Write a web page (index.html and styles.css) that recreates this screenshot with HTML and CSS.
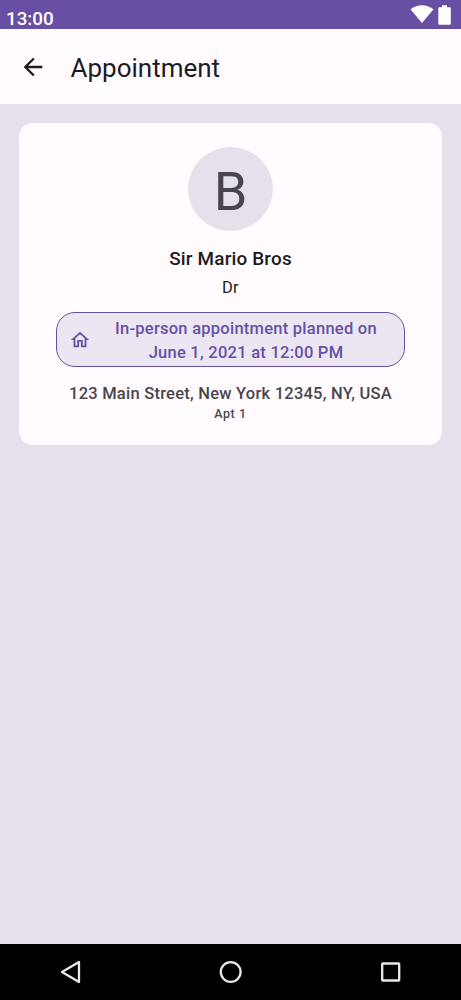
FILE: index.html
```html
<!DOCTYPE html>
<html lang="en">
<head>
<meta charset="utf-8">
<title>Appointment</title>
<link rel="stylesheet" href="styles.css">
</head>
<body>
<div class="screen">
  <div class="status-bar">
    <span class="clock">13:00</span>
    <div class="status-icons">
      <svg class="wifi" width="24" height="18" viewBox="0 0 24 18"><path d="M.5 4.300Q12-4 23.500 4.300L12 18Z"/></svg>
      <svg class="battery" width="13" height="20" viewBox="0 0 13 20"><path d="M4 .3h5v2h2.800q1 0 1 1v15.200q0 1.200-1.200 1.200H1.400Q.3 19.700.3 18.500V3.300q0-1 1-1H4z"/></svg>
    </div>
  </div>
  <header class="app-bar">
    <svg class="back" width="28" height="28" viewBox="0 0 24 24"><path d="M20 11H7.830l5.590-5.590L12 4l-8 8 8 8 1.410-1.410L7.830 13H20v-2z"/></svg>
    <h1 class="title">Appointment</h1>
  </header>
  <main class="content">
    <section class="card">
      <div class="avatar"><span class="initial">B</span></div>
      <div class="name">Sir Mario Bros</div>
      <div class="role">Dr</div>
      <div class="chip">
        <svg class="home" width="22" height="22" viewBox="0 0 24 24"><path d="M12 5.690l5 4.500V18h-2v-6H9v6H7v-7.810l5-4.500M12 3L2 12h3v8h6v-6h2v6h6v-8h3L12 3z"/></svg>
        <div class="chip-text"><div class="chip-line">In-person appointment planned on</div><div class="chip-line">June 1, 2021 at 12:00 PM</div></div>
      </div>
      <div class="address">123 Main Street, New York 12345, NY, USA</div>
      <div class="unit">Apt 1</div>
    </section>
  </main>
  <nav class="nav-bar">
    <svg width="24" height="24" viewBox="0 0 24 24"><path d="M20 2v20L3 12z"/></svg>
    <svg width="24" height="24" viewBox="0 0 24 24"><circle cx="11.700" cy="12" r="9.900"/></svg>
    <svg width="24" height="24" viewBox="0 0 24 24"><rect x="3.200" y="3.500" width="17" height="17" rx=".5"/></svg>
  </nav>
</div>
</body>
</html>
```
FILE: styles.css
```css
* { box-sizing: border-box; }
body { margin: 0; font-family: Roboto, sans-serif; color: #1c1b1f; }
svg { display: block; flex: none; }
.screen { width: 461px; height: 1000px; display: flex; flex-direction: column; background: #e6dfec; }
.status-bar { height: 29px; background: #6750a4; display: flex; justify-content: space-between; padding: 5px 10px 0 6px; color: #fff; fill: #fff; }
.clock { font-size: 18.800px; line-height: 28px; font-weight: 500; }
.status-icons { display: flex; gap: 4px; }
.app-bar { height: 75px; background: #fffbfe; display: flex; align-items: center; padding-left: 19px; }
.back { fill: #1c1b1f; }
.title { margin: 3px 0 0 23.500px; font-size: 26px; line-height: 32px; font-weight: 400; white-space: nowrap; }
.content { flex: 1; padding: 19px; }
.card { height: 322px; border-radius: 14px; background: #fffbfe; display: flex; flex-direction: column; align-items: center; padding-top: 24px; white-space: nowrap; }
.avatar { width: 85px; height: 84px; border-radius: 50%; background: #e6dfec; display: flex; justify-content: center; flex: none; }
.initial { font-size: 54px; line-height: 89px; color: #49454f; }
.name { margin-top: 14px; font-size: 18.900px; line-height: 28px; font-weight: 500; letter-spacing: .18px; }
.role { margin-top: 3px; font-size: 16.500px; line-height: 24px; letter-spacing: .3px; }
.chip { width: 349px; height: 55px; margin-top: 12px; border: 1.500px solid #6750a4; border-radius: 19px; background: #ece6f3; display: flex; align-items: center; padding-left: 11.500px; flex: none; color: #6750a4; }
.home { fill: #6750a4; }
.chip-text { width: 290px; margin: 2px 0 0 10.500px; text-align: center; font-size: 16.500px; line-height: 24px; font-weight: 500; letter-spacing: .25px; }
.address { margin-top: 15px; font-size: 16.500px; line-height: 24px; font-weight: 500; color: #49454f; letter-spacing: .235px; }
.unit { font-size: 12.500px; line-height: 16px; font-weight: 500; letter-spacing: .6px; color: #49454f; }
.nav-bar { height: 56.500px; background: #000; display: flex; justify-content: space-between; align-items: center; padding: 0 58px 0 59px; }
.nav-bar svg { fill: none; stroke: #e8e8e8; stroke-width: 2.300; stroke-linejoin: round; }
```
